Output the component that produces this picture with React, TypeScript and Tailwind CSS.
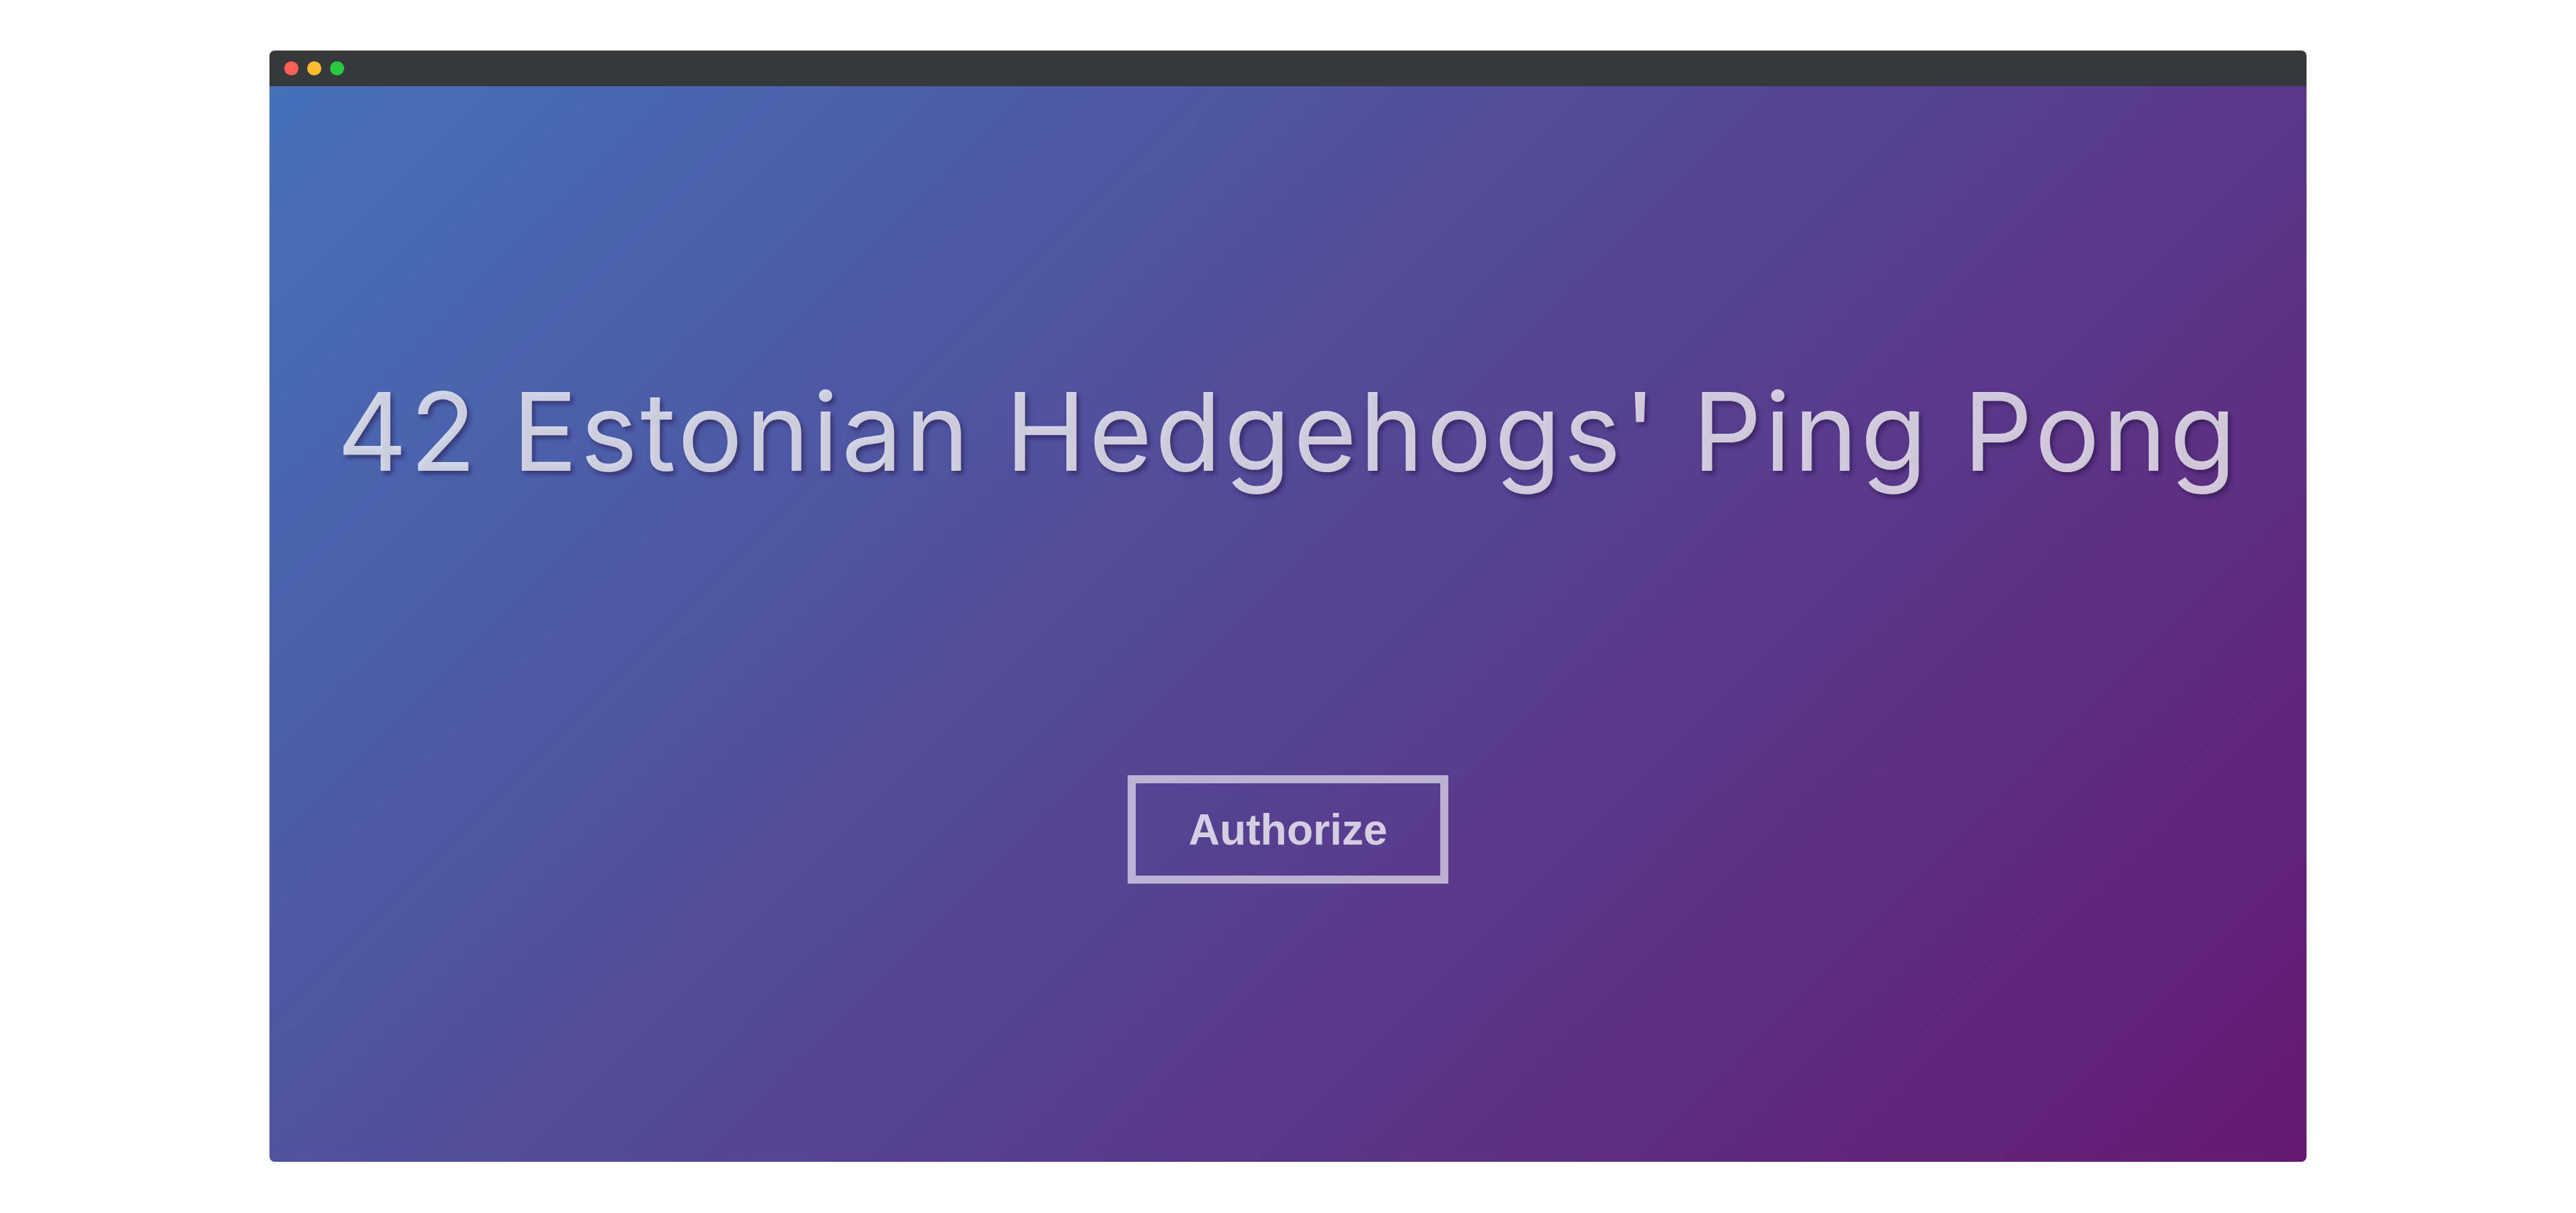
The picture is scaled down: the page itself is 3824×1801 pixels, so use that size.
export default function App() {
  return (
    <div className="min-h-screen bg-white px-[400px] pt-[75px] pb-[76px]">
      <div className="flex flex-col overflow-hidden rounded-[8px]">
        <div className="flex h-[53px] items-center gap-[13px] bg-[#37383a] pl-[22px]">
          <span className="h-[21px] w-[21px] rounded-full bg-[#ff5f57]" />
          <span className="h-[21px] w-[21px] rounded-full bg-[#febc2e]" />
          <span className="h-[21px] w-[21px] rounded-full bg-[#28c840]" />
        </div>
        <div className="flex h-[1597px] flex-col items-center bg-[linear-gradient(135deg,#4571b9,#651970)] pt-[432px]">
          <h1 className="whitespace-nowrap font-['Inter',sans-serif] text-[161px] font-[380] leading-none tracking-[4.2px] text-white/75 [text-shadow:4px_5px_6px_rgba(30,10,60,0.45)]">
            42 Estonian Hedgehogs' Ping Pong
          </h1>
          <button className="mt-[430px] flex h-[161px] w-[476px] items-center justify-center border-[12px] border-white/60 font-['Liberation_Sans',Arial,sans-serif] text-[64px] font-bold text-white/75">
            Authorize
          </button>
        </div>
      </div>
    </div>
  );
}
